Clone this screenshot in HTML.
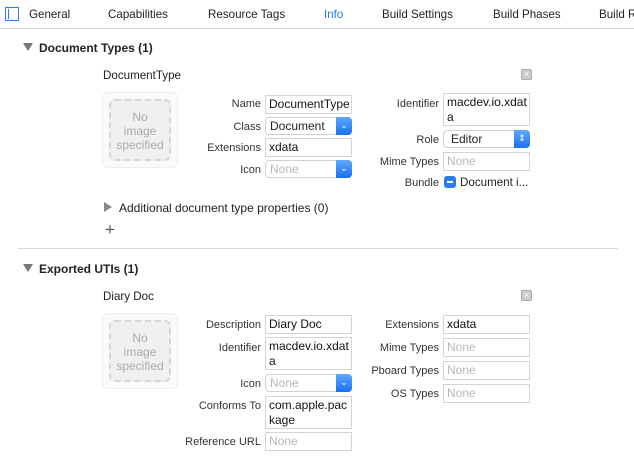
<!DOCTYPE html><html><head><style>
*{margin:0;padding:0;box-sizing:border-box}
body{width:634px;height:462px;overflow:hidden;background:#fff;font-family:"Liberation Sans",sans-serif;font-size:11.6px;color:#222;position:relative}
.a{position:absolute;white-space:nowrap}
.l{position:absolute;text-align:right;width:120px;color:#333;line-height:14px;margin-top:1px;font-size:11px}
.f{position:absolute;border:1px solid #d4d4d4;background:#fff;padding:1px 3px;line-height:15px;font-size:12px;color:#111;width:87px}
.ph{color:#b8b8b8}
.pop{position:absolute;border:1px solid #d0d0d0;border-radius:4px;background:#fff;width:87px;height:18px;padding:1px 4px;line-height:15px;font-size:12px}
.btn{position:absolute;right:-1px;top:-1px;width:16px;height:18px;background:linear-gradient(#5fa9ff,#1a6ff0);border-radius:0 4px 4px 0;color:#fff;font-size:9px;text-align:center;line-height:17px}
.img{position:absolute;width:76px;height:76px;border:1px solid #eee;border-radius:6px;background:#fafafa}
.img div{position:absolute;left:6px;top:6px;width:62px;height:62px;border:2px dashed #d6d6d6;border-radius:6px;background:#f0f0f0;color:#aaa;font-size:12px;text-align:center;line-height:14px;padding-top:9px}
.x{position:absolute;width:11px;height:11px;background:#ccc;border:1px solid #aaa;border-radius:2px;color:#fff;font-size:9px;line-height:9px;text-align:center}
.h{position:absolute;font-weight:bold;font-size:12px}
.tri{position:absolute;width:0;height:0;border-left:5px solid transparent;border-right:5px solid transparent;border-top:8px solid #777}
.trir{position:absolute;width:0;height:0;border-top:5px solid transparent;border-bottom:5px solid transparent;border-left:8px solid #888}
</style></head><body>
<div class="a" style="left:5px;top:7px;width:14px;height:14px;border:1.5px solid #2b7bf0"></div>
<div class="a" style="left:8px;top:9px;width:1px;height:10px;background:#2b7bf0"></div>
<div class="a" style="left:29px;top:8px">General</div>
<div class="a" style="left:108px;top:8px">Capabilities</div>
<div class="a" style="left:208px;top:8px">Resource Tags</div>
<div class="a" style="left:324px;top:8px;color:#2a78e8">Info</div>
<div class="a" style="left:382px;top:8px">Build Settings</div>
<div class="a" style="left:493px;top:8px">Build Phases</div>
<div class="a" style="left:599px;top:8px">Build Rules</div>
<div class="a" style="left:0;top:28px;width:634px;height:1px;background:#d8d8d8"></div>

<div class="tri" style="left:23px;top:43px"></div>
<div class="h" style="left:39px;top:41px">Document Types (1)</div>
<div class="a" style="left:103px;top:69px">DocumentType</div>
<div class="x" style="left:521px;top:69px">×</div>
<div class="img" style="left:102px;top:92px"><div>No<br>image<br>specified</div></div>
<div class="l" style="left:141px;top:96px">Name</div><div class="f" style="left:265px;top:95px">DocumentType</div>
<div class="l" style="left:141px;top:119px">Class</div><div class="pop" style="left:265px;top:117px">Document<span class="btn">⌄</span></div>
<div class="l" style="left:141px;top:140px">Extensions</div><div class="f" style="left:265px;top:138px">xdata</div>
<div class="l" style="left:141px;top:162px">Icon</div><div class="pop ph" style="left:265px;top:160px">None<span class="btn">⌄</span></div>
<div class="l" style="left:319px;top:96px">Identifier</div><div class="f" style="left:443px;top:93px;white-space:normal;height:33px">macdev.io.xdat a</div>
<div class="l" style="left:319px;top:132px">Role</div><div class="pop" style="left:443px;top:130px;padding-left:7px">Editor<span class="btn">⇕</span></div>
<div class="l" style="left:319px;top:154px">Mime Types</div><div class="f ph" style="left:443px;top:152px">None</div>
<div class="l" style="left:319px;top:175px">Bundle</div>
<div class="a" style="left:444px;top:176px;width:12px;height:12px;border-radius:3px;background:#2b7bf0"><div style="margin:5px 3px;height:2px;background:#fff"></div></div>
<div class="a" style="left:460px;top:176px">Document i...</div>
<div class="trir" style="left:104px;top:202px"></div>
<div class="a" style="left:119px;top:201px;font-size:12px">Additional document type properties (0)</div>
<div class="a" style="left:105px;top:220px;font-size:17px;color:#555;font-weight:300">+</div>
<div class="a" style="left:18px;top:248px;width:600px;height:1px;background:#d8d8d8"></div>

<div class="tri" style="left:23px;top:264px"></div>
<div class="h" style="left:39px;top:262px">Exported UTIs (1)</div>
<div class="a" style="left:103px;top:290px">Diary Doc</div>
<div class="x" style="left:521px;top:290px">×</div>
<div class="img" style="left:102px;top:313px"><div>No<br>image<br>specified</div></div>
<div class="l" style="left:141px;top:317px">Description</div><div class="f" style="left:265px;top:315px">Diary Doc</div>
<div class="l" style="left:141px;top:340px">Identifier</div><div class="f" style="left:265px;top:337px;white-space:normal;height:33px">macdev.io.xdat a</div>
<div class="l" style="left:141px;top:376px">Icon</div><div class="pop ph" style="left:265px;top:374px">None<span class="btn">⌄</span></div>
<div class="l" style="left:141px;top:398px">Conforms To</div><div class="f" style="left:265px;top:396px;white-space:normal;height:33px">com.apple.pac kage</div>
<div class="l" style="left:141px;top:434px">Reference URL</div><div class="f ph" style="left:265px;top:432px">None</div>
<div class="l" style="left:319px;top:317px">Extensions</div><div class="f" style="left:443px;top:315px">xdata</div>
<div class="l" style="left:319px;top:340px">Mime Types</div><div class="f ph" style="left:443px;top:338px">None</div>
<div class="l" style="left:319px;top:363px">Pboard Types</div><div class="f ph" style="left:443px;top:361px">None</div>
<div class="l" style="left:319px;top:386px">OS Types</div><div class="f ph" style="left:443px;top:384px">None</div>
</body></html>
